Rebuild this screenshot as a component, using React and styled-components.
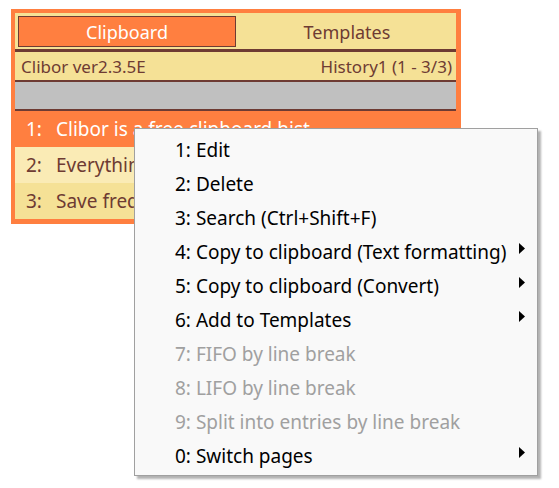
import React from "react";
import styled, { createGlobalStyle } from "styled-components";

const GlobalStyle = createGlobalStyle`
  html, body {
    margin: 0;
    padding: 0;
    background: #ffffff;
  }
  body {
    font-family: "Noto Sans", "Open Sans", sans-serif;
  }
`;

const ORANGE = "#ff7f40";
const YELLOW = "#f5e196";
const BROWN = "#6e3b33";

const Page = styled.div`
  position: relative;
  width: 559px;
  height: 488px;
  padding: 9px 0 0 11px;
  box-sizing: border-box;
`;

const Window = styled.div`
  width: 450px;
  background: ${ORANGE};
  padding: 4px 5px 5px 4px;
  box-sizing: border-box;
  display: flex;
  flex-direction: column;
`;

const TabBar = styled.div`
  display: grid;
  grid-template-columns: 1fr 1fr;
  gap: 2px;
  height: 39px;
  padding: 3px 0 2px 3px;
  box-sizing: border-box;
  background: ${YELLOW};
  border-bottom: 3px solid ${BROWN};
`;

const Tab = styled.div`
  display: flex;
  align-items: center;
  justify-content: center;
  font-size: 18px;
  padding-top: 1px;
  color: ${(p) => (p.active ? "#ffffff" : BROWN)};
  background: ${(p) => (p.active ? ORANGE : "transparent")};
  border: 1px solid ${(p) => (p.active ? BROWN : "transparent")};
`;

const StatusBar = styled.div`
  display: flex;
  justify-content: space-between;
  align-items: center;
  height: 30px;
  padding: 0 4px 0 6px;
  box-sizing: border-box;
  background: ${YELLOW};
  border-bottom: 2px solid ${BROWN};
  color: ${BROWN};
  font-size: 17px;
`;

const SearchBar = styled.div`
  height: 29px;
  box-sizing: border-box;
  background: #c0c0c0;
  border-bottom: 2px solid ${BROWN};
`;

const Row = styled.div`
  display: flex;
  align-items: center;
  height: 36px;
  padding-left: 11px;
  font-size: 19px;
  white-space: nowrap;
  overflow: hidden;
  color: ${(p) => (p.selected ? "#ffffff" : BROWN)};
  background: ${(p) => p.bg};
`;

const RowIndex = styled.span`
  width: 30px;
  flex-shrink: 0;
`;

const Menu = styled.div`
  position: absolute;
  left: 134px;
  top: 128px;
  width: 404px;
  padding: 4px 0 2px;
  box-sizing: border-box;
  background: #f9f9f9;
  border: 1px solid #a0a0a0;
  box-shadow: 3px 3px 2px rgba(0, 0, 0, 0.3);
`;

const MenuItem = styled.div`
  position: relative;
  display: flex;
  align-items: center;
  height: 34px;
  padding-left: 40px;
  font-size: 19px;
  color: ${(p) => (p.disabled ? "#a0a0a0" : "#000000")};
`;

const Arrow = styled.svg`
  position: absolute;
  right: 12px;
  top: 8px;
`;

const rows = [
  { n: "1:", text: "Clibor is a free clipboard hist", bg: ORANGE, selected: true },
  { n: "2:", text: "Everything you copy is kept here", bg: "#faebb5" },
  { n: "3:", text: "Save frequently used phrases", bg: YELLOW },
];

const items = [
  { label: "1: Edit" },
  { label: "2: Delete" },
  { label: "3: Search (Ctrl+Shift+F)" },
  { label: "4: Copy to clipboard (Text formatting)", sub: true },
  { label: "5: Copy to clipboard (Convert)", sub: true },
  { label: "6: Add to Templates", sub: true },
  { label: "7: FIFO by line break", disabled: true },
  { label: "8: LIFO by line break", disabled: true },
  { label: "9: Split into entries by line break", disabled: true },
  { label: "0: Switch pages", sub: true },
];

export default function App() {
  return (
    <>
      <GlobalStyle />
      <Page>
        <Window>
          <TabBar>
            <Tab active>Clipboard</Tab>
            <Tab>Templates</Tab>
          </TabBar>
          <StatusBar>
            <span>Clibor ver2.3.5E</span>
            <span>History1 (1 - 3/3)</span>
          </StatusBar>
          <SearchBar />
          {rows.map((r) => (
            <Row key={r.n} bg={r.bg} selected={r.selected}>
              <RowIndex>{r.n}</RowIndex>
              {r.text}
            </Row>
          ))}
        </Window>

        <Menu>
          {items.map((it) => (
            <MenuItem key={it.label} disabled={it.disabled}>
              {it.label}
              {it.sub && (
                <Arrow width="6" height="11" viewBox="0 0 6 11">
                  <path d="M0 0 L6 5.5 L0 11 Z" fill="#000" />
                </Arrow>
              )}
            </MenuItem>
          ))}
        </Menu>
      </Page>
    </>
  );
}
